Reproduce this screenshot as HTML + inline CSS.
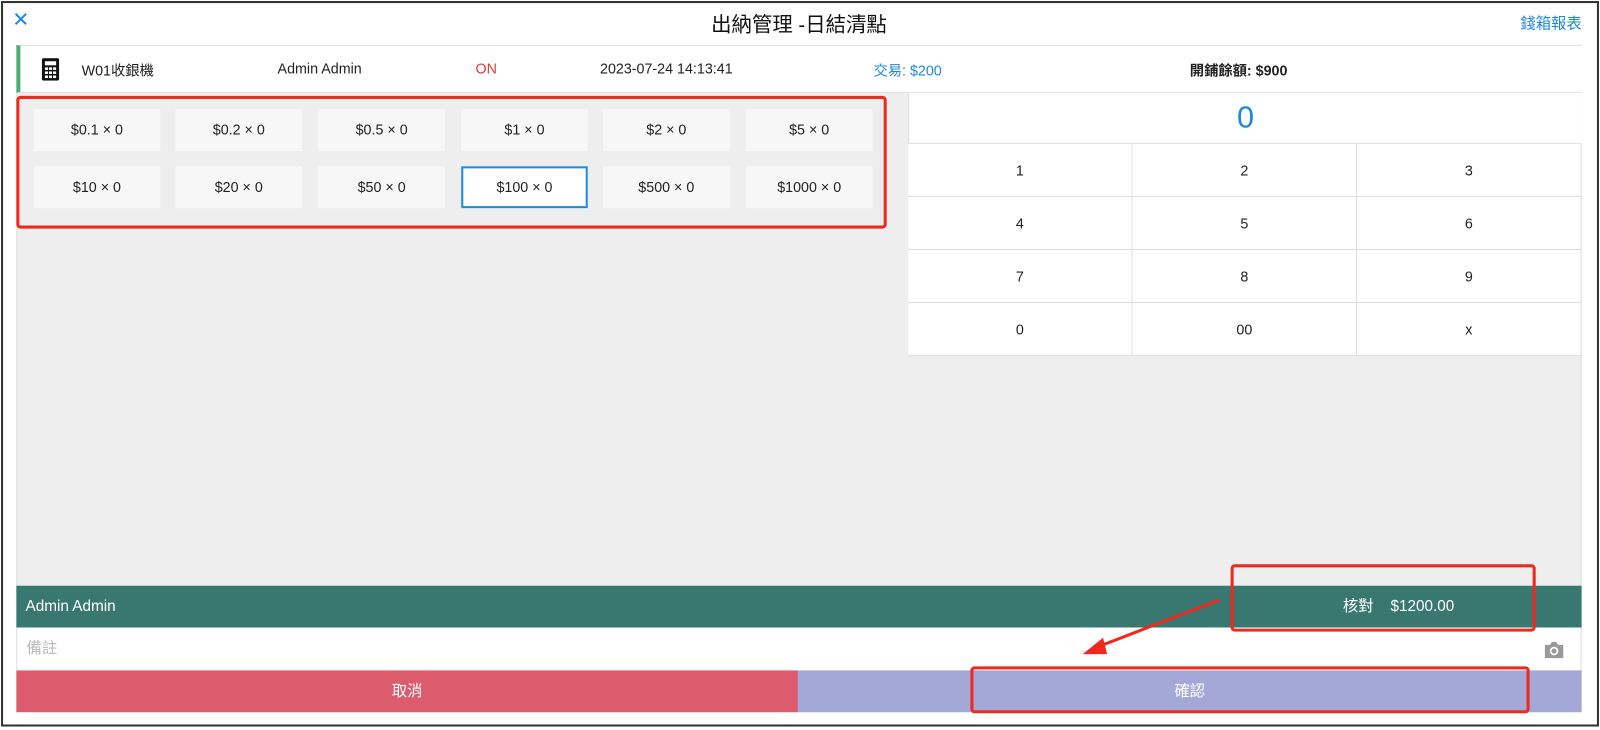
<!DOCTYPE html>
<html><head><meta charset="utf-8"><style>
*{box-sizing:border-box;margin:0;padding:0}
body{width:1600px;height:729px;background:#fff;position:relative;overflow:hidden;font-family:"Liberation Sans","Noto Sans CJK TC",sans-serif;font-size:14px;color:#222}
#w{position:absolute;left:0;top:0;width:1568px;height:715px;transform:scale(1.0204);transform-origin:0 0}
.abs{position:absolute}
.frame{left:1px;top:1px;width:1566px;height:711px;border:2px solid #333}
.btn{position:absolute;width:124px;height:41px;background:#f7f7f7;text-align:center;line-height:41px;font-size:14px;color:#222}
.key{position:absolute;width:220px;height:52px;border-right:1px solid #ddd;border-bottom:1px solid #ddd;text-align:center;line-height:52px;font-size:14px;background:#fff}
.red{position:absolute;border:3px solid #ee2a1f;border-radius:4px}
</style></head><body><div id="w">
<div class="abs frame"></div>
<div class="abs" style="left:12px;top:8px;font-size:20px;color:#1e88e5;line-height:24px">✕</div>
<div class="abs" style="left:0;width:1566px;top:8px;text-align:center;font-size:20px;color:#111">出納管理 -日結清點</div>
<div class="abs" style="left:1490px;top:12px;font-size:15px;color:#1e88e5">錢箱報表</div>
<div class="abs" style="left:16px;top:44px;width:1534px;height:47px;background:#fff;border-top:1px solid #ddd;border-bottom:1px solid #ddd;border-left:4px solid #4caf72"></div>
<svg class="abs" style="left:41px;top:57px" width="17" height="22" viewBox="0 0 17 22"><rect x="0" y="0" width="17" height="22" rx="2" fill="#111"/><rect x="3" y="3" width="11" height="4" fill="#fff"/><g fill="#fff"><rect x="3" y="9" width="3" height="2.5"/><rect x="7" y="9" width="3" height="2.5"/><rect x="11" y="9" width="3" height="2.5"/><rect x="3" y="13" width="3" height="2.5"/><rect x="7" y="13" width="3" height="2.5"/><rect x="11" y="13" width="3" height="2.5"/><rect x="3" y="17" width="3" height="2.5"/><rect x="7" y="17" width="3" height="2.5"/><rect x="11" y="17" width="3" height="2.5"/></g></svg>
<div class="abs" style="left:80px;top:59px">W01收銀機</div>
<div class="abs" style="left:272px;top:59px">Admin Admin</div>
<div class="abs" style="left:466px;top:59px;color:#e53935">ON</div>
<div class="abs" style="left:588px;top:59px">2023-07-24 14:13:41</div>
<div class="abs" style="left:856px;top:59px;color:#1e88e5">交易: $200</div>
<div class="abs" style="left:1166px;top:59px;font-weight:bold">開鋪餘額: $900</div>
<div class="abs" style="left:16px;top:91px;width:1534px;height:483px;background:#eee;border-left:1px solid #ddd;border-right:1px solid #ddd"></div>
<div class="btn" style="left:33px;top:107px">$0.1 × 0</div>
<div class="btn" style="left:172px;top:107px">$0.2 × 0</div>
<div class="btn" style="left:312px;top:107px">$0.5 × 0</div>
<div class="btn" style="left:452px;top:107px">$1 × 0</div>
<div class="btn" style="left:591px;top:107px">$2 × 0</div>
<div class="btn" style="left:731px;top:107px">$5 × 0</div>
<div class="btn" style="left:33px;top:163px">$10 × 0</div>
<div class="btn" style="left:172px;top:163px">$20 × 0</div>
<div class="btn" style="left:312px;top:163px">$50 × 0</div>
<div class="btn" style="left:452px;top:163px;border:2px solid #1e88e5;background:#fff;line-height:37px">$100 × 0</div>
<div class="btn" style="left:591px;top:163px">$500 × 0</div>
<div class="btn" style="left:731px;top:163px">$1000 × 0</div>
<div class="red" style="left:16px;top:94px;width:853px;height:130px"></div>
<div class="abs" style="left:890px;top:91px;width:660px;height:50px;background:#fff;border-left:1px solid #ddd;border-bottom:1px solid #ddd;text-align:right;padding-right:321px;font-size:30px;line-height:50px;color:#1e88e5">0</div>
<div class="abs" style="left:890px;top:141px;width:660px;height:208px;border-left:1px solid #ddd"></div>
<div class="key" style="left:890px;top:141px">1</div><div class="key" style="left:1110px;top:141px">2</div><div class="key" style="left:1330px;top:141px">3</div>
<div class="key" style="left:890px;top:193px">4</div><div class="key" style="left:1110px;top:193px">5</div><div class="key" style="left:1330px;top:193px">6</div>
<div class="key" style="left:890px;top:245px">7</div><div class="key" style="left:1110px;top:245px">8</div><div class="key" style="left:1330px;top:245px">9</div>
<div class="key" style="left:890px;top:297px">0</div><div class="key" style="left:1110px;top:297px">00</div><div class="key" style="left:1330px;top:297px">x</div>
<div class="abs" style="left:16px;top:574px;width:1534px;height:41px;background:#397870;color:#fff;font-size:15px;line-height:41px;padding-left:9px">Admin Admin</div>
<div class="abs" style="left:1316px;top:574px;line-height:41px;color:#fff;font-size:15px">核對&nbsp;&nbsp;&nbsp;&nbsp;$1200.00</div>
<div class="abs" style="left:16px;top:615px;width:1534px;height:42px;background:#fff;border-left:1px solid #ddd;border-right:1px solid #ddd;color:#bbb;font-size:15px;line-height:42px;padding-left:9px">備註</div>
<svg class="abs" style="left:1512px;top:628px" width="22" height="18" viewBox="0 0 22 18"><path d="M2 4h5l2-3h4l2 3h5v13H2z" fill="#999"/><circle cx="11" cy="10" r="4.2" fill="#fff"/><circle cx="11" cy="10" r="2.5" fill="#999"/></svg>
<div class="abs" style="left:16px;top:657px;width:766px;height:41px;background:#dc5c6e;color:#fff;text-align:center;line-height:41px;font-size:15px">取消</div>
<div class="abs" style="left:782px;top:657px;width:768px;height:41px;background:#a4a8d6;color:#fff;text-align:center;line-height:41px;font-size:15px">確認</div>
<div class="red" style="left:1206px;top:553px;width:299px;height:66px"></div>
<div class="red" style="left:951px;top:653px;width:548px;height:46px"></div>
<svg class="abs" style="left:1055px;top:585px" width="145" height="60"><line x1="140" y1="3" x2="18" y2="50" stroke="#ee2a1f" stroke-width="3"/><polygon points="6,56 26,40 30,56" fill="#ee2a1f"/></svg>
</div></body></html>
